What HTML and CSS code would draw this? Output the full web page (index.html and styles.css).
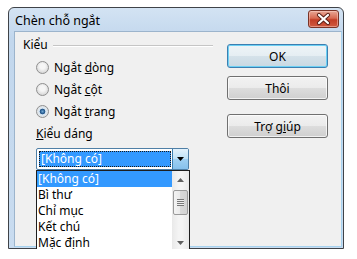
FILE: index.html
```html
<!DOCTYPE html>
<html lang="vi">

<head>
    <meta charset="UTF-8">
    <meta name="viewport" content="width=device-width, initial-scale=1.0">
    <link rel="stylesheet" href="styles.css">
</head>

<body>
    <div class="screen">
        <div class="window">
            <div class="titlebar">
                <span class="title">Chèn chỗ ngắt</span>
                <span class="close">
                    <svg width="29" height="16" viewBox="0 0 29 16">
                        <path d="M10 4 L19 12 M19 4 L10 12" stroke="#5b2118" stroke-width="4.2" stroke-linecap="round" fill="none" />
                        <path d="M10 4 L19 12 M19 4 L10 12" stroke="#fff" stroke-width="2.2" stroke-linecap="round" fill="none" />
                    </svg>
                </span>
            </div>

            <div class="client">
                <div class="left">
                    <div class="group-title">
                        <span>Kiểu</span>
                        <span class="rule"></span>
                    </div>

                    <div class="options">
                        <label class="option"><span class="radio"></span><span>Ngắt <u>d</u>òng</span></label>
                        <label class="option"><span class="radio"></span><span>Ngắt <u>c</u>ột</span></label>
                        <label class="option"><span class="radio checked"></span><span>Ngắt <u>t</u>rang</span></label>
                    </div>

                    <div class="field-label"><u>K</u>iểu dáng</div>

                    <div class="combo">
                        <div class="combo-value"><span>[Không có]</span></div>
                        <div class="combo-button">
                            <svg width="8" height="5" viewBox="0 0 8 5"><path d="M0 0 H7 L3.5 4 Z" fill="#000" /></svg>
                        </div>

                        <div class="popup">
                            <ul class="items">
                                <li class="selected">[Không có]</li>
                                <li>Bì thư</li>
                                <li>Chỉ mục</li>
                                <li>Kết chú</li>
                                <li>Mặc định</li>
                            </ul>
                            <div class="scrollbar">
                                <div class="arrow">
                                    <svg width="7" height="4" viewBox="0 0 7 4"><path d="M0 4 H7 L3.5 0 Z" fill="#606060" /></svg>
                                </div>
                                <div class="track">
                                    <div class="thumb"><span class="grip"></span></div>
                                </div>
                                <div class="arrow">
                                    <svg width="7" height="4" viewBox="0 0 7 4"><path d="M0 0 H7 L3.5 4 Z" fill="#606060" /></svg>
                                </div>
                            </div>
                        </div>
                    </div>
                </div>

                <div class="buttons">
                    <button class="btn default">OK</button>
                    <button class="btn">Thôi</button>
                    <button class="btn help">Trợ g<u>i</u>úp</button>
                </div>
            </div>
        </div>
    </div>
</body>

</html>
```

FILE: styles.css
```css
body {
    margin: 0;
    background-color: #fff;
    font-family: "Noto Sans", "Open Sans", sans-serif;
    font-size: 12px;
    color: #000;
}

.screen {
    padding: 7px 0 0 8px;
}

.window {
    width: 336px;
    height: 242px;
    box-sizing: border-box;
    border: 1px solid #3f4348;
    border-radius: 6px 6px 0 0;
    background: linear-gradient(#d3e3f3, #c2d7ed 30px, #c9dcf0);
    padding: 0 1px 1px 5px;
    display: flex;
    flex-direction: column;
}

.titlebar {
    height: 23px;
    display: flex;
    justify-content: space-between;
    align-items: flex-start;
}

.title {
    margin: 5px 0 0 1px;
    line-height: 16px;
    font-size: 12.5px;
}

.close {
    margin: 2px 3px 0 0;
    width: 31px;
    height: 18px;
    box-sizing: border-box;
    border: 1px solid #7a3326;
    border-radius: 3px;
    background: linear-gradient(#e8a796, #d86a52 45%, #c23d26 55%, #d05a40);
    box-shadow: inset 0 0 0 1px rgba(255, 220, 210, 0.45);
    display: flex;
    align-items: center;
    justify-content: center;
}

.client {
    flex: 1;
    display: flex;
    border: 1px solid #9cb4cc;
    border-bottom-color: #a6d2ef;
    border-right-color: #a6d2ef;
    background-color: #f0f0f0;
    padding-left: 8px;
}

.left {
    width: 190px;
}

.group-title {
    margin-top: 5px;
    display: flex;
    align-items: center;
    line-height: 16px;
}

.rule {
    flex: 1;
    margin-left: 5px;
    margin-top: 2px;
    border-top: 1px solid #c5c5c5;
    border-bottom: 1px solid #fff;
}

.options {
    padding: 3px 0 0 13px;
}

.option {
    height: 22px;
    display: flex;
    align-items: center;
}

.radio {
    width: 13px;
    height: 13px;
    box-sizing: border-box;
    border: 1px solid #8f8f8f;
    border-radius: 50%;
    margin-right: 5px;
    background: radial-gradient(circle at 50% 40%, #f6f6f6 30%, #d8d8d8 75%, #eeeeee);
}

.radio.checked {
    background: radial-gradient(circle, #6fa7d4 0, #1c4f84 2.5px, #d9e7f3 3.2px, #e4e4e4 75%, #f2f2f2);
}

.field-label {
    margin: 4px 0 0 13px;
    line-height: 16px;
}

.combo {
    position: relative;
    margin: 6px 0 0 13px;
    width: 153px;
    height: 22px;
    box-sizing: border-box;
    border: 1px solid #4f7fa6;
    border-radius: 2px;
    background-color: #fff;
    display: flex;
}

.combo-value {
    flex: 1;
    padding: 2px 1px 2px 2px;
}

.combo-value span {
    display: block;
    height: 16px;
    box-sizing: border-box;
    border: 1px dotted #1a1a1a;
    background-color: #3399ff;
    color: #fff;
    line-height: 14px;
    padding-left: 1px;
}

.combo-button {
    width: 16px;
    box-sizing: border-box;
    border-left: 1px solid #3c7fb1;
    background: linear-gradient(#e3f2fc, #bde1f7 50%, #9fd0f2 50%, #86c1ec);
    display: flex;
    align-items: center;
    justify-content: center;
}

.popup {
    position: absolute;
    top: 21px;
    left: -1px;
    width: 154px;
    height: 82px;
    box-sizing: border-box;
    border: 1px solid #1e1e1e;
    background-color: #fff;
    display: flex;
}

.items {
    flex: 1;
    list-style: none;
    margin: 0;
    padding: 0;
}

.items li {
    height: 16px;
    line-height: 16px;
    padding-left: 1px;
}

.items li.selected {
    background-color: #3399ff;
    color: #fff;
}

.scrollbar {
    width: 17px;
    display: flex;
    flex-direction: column;
    background: linear-gradient(90deg, #e9e9e9, #f4f4f4 40%, #f4f4f4 60%, #e9e9e9);
}

.arrow {
    height: 17px;
    display: flex;
    align-items: center;
    justify-content: center;
}

.track {
    flex: 1;
    padding: 2px 1px 0;
}

.thumb {
    height: 25px;
    box-sizing: border-box;
    border: 1px solid #9a9a9a;
    border-radius: 2px;
    background: linear-gradient(90deg, #f4f4f4, #e9e9e9 50%, #d9d9d9 50%, #d2d2d2);
    display: flex;
    align-items: center;
    justify-content: center;
}

.grip {
    width: 7px;
    height: 7px;
    background: repeating-linear-gradient(#777 0 1px, #eee 1px 2px);
}

.buttons {
    margin-left: 14px;
    padding-top: 12px;
    width: 101px;
    display: flex;
    flex-direction: column;
}

.btn {
    height: 24px;
    margin-bottom: 8px;
    box-sizing: border-box;
    border: 1px solid #707070;
    border-radius: 3px;
    background: linear-gradient(#f2f2f2, #ebebeb 50%, #dddddd 50%, #cfcfcf);
    box-shadow: inset 0 0 0 1px rgba(255, 255, 255, 0.7);
    font-family: inherit;
    font-size: 12px;
    color: #000;
    padding: 0;
}

.btn.default {
    border-color: #3c7fb1;
    box-shadow: inset 0 0 0 1px #6cd0f4;
    background: linear-gradient(#eef4f7, #e5eef3 50%, #d5e2ea 50%, #c8d8e2);
}

.btn.help {
    margin-top: 6px;
}
```
